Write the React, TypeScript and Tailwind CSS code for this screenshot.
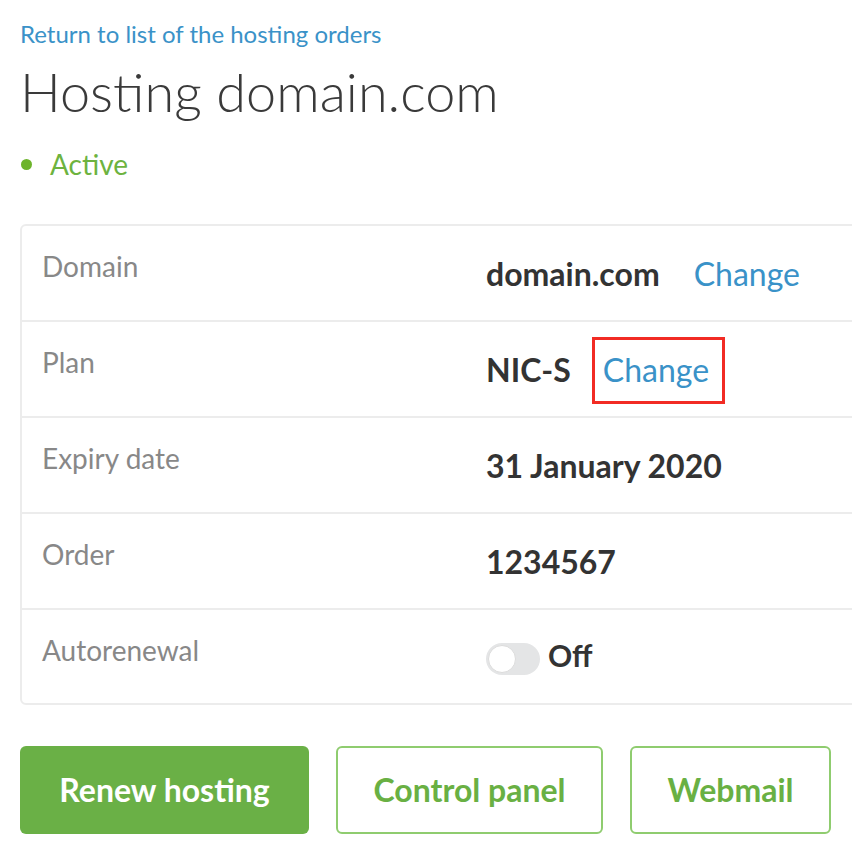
const rows = [
  { label: "Domain", value: "domain.com", change: true },
  { label: "Plan", value: "NIC-S", change: true, highlight: true },
  { label: "Expiry date", value: "31 January 2020" },
  { label: "Order", value: "1234567" },
];

function ChangeLink({ highlight }: { highlight?: boolean }) {
  if (highlight) {
    return (
      <span className="ml-[21px] -mt-[15px] inline-block border-[3px] border-[#f22b24] pl-[8px] pr-[13px] pt-[12px] pb-[13px] text-[32px] font-normal leading-[36px] text-[#3a92c8]">
        Change
      </span>
    );
  }
  return (
    <span className="ml-[34px] text-[32px] font-normal leading-[36px] text-[#3a92c8]">
      Change
    </span>
  );
}

export default function App() {
  return (
    <div className="min-h-[854px] overflow-hidden bg-white font-['Lato',sans-serif]">
      <div className="pl-[20px] pt-[18px]">
        <a className="block text-[24px] leading-[32px] text-[#3a92c8]">
          Return to list of the hosting orders
        </a>
        <h1 className="mt-[10px] text-[54px] font-light leading-[64px] text-[#3a3a3a]">
          Hosting domain.com
        </h1>
        <div className="mt-[24px] flex items-center">
          <span className="ml-[1px] h-[11px] w-[11px] rounded-full bg-[#6db42b]" />
          <span className="ml-[18px] text-[28px] leading-[32px] text-[#6db33f]">
            Active
          </span>
        </div>

        <div className="mt-[44px] w-[860px] rounded-[6px] border-2 border-[#ececec]">
          {rows.map((r) => (
            <div
              key={r.label}
              className="flex h-[96px] border-b-2 border-[#ececec]"
            >
              <div className="w-[464px] shrink-0 pl-[20px] pt-[24px] text-[28px] leading-[32px] text-[#888]">
                {r.label}
              </div>
              <div className="flex items-baseline self-start pt-[30px] text-[32px] font-bold leading-[36px] text-[#333]">
                <span>{r.value}</span>
                {r.change && <ChangeLink highlight={r.highlight} />}
              </div>
            </div>
          ))}
          <div className="flex h-[93px]">
            <div className="w-[464px] shrink-0 pl-[20px] pt-[24px] text-[28px] leading-[32px] text-[#888]">
              Autorenewal
            </div>
            <div className="flex items-start pt-[33px]">
              <div className="flex h-[32px] w-[54px] items-center rounded-full bg-[#e4e5e6] pl-[2px]">
                <div className="h-[28px] w-[28px] rounded-full border border-[#dcdcdc] bg-white" />
              </div>
              <span className="ml-[8px] -mt-[4px] text-[30px] font-bold leading-[32px] text-[#333]">
                Off
              </span>
            </div>
          </div>
        </div>

        <div className="mt-[41px] flex gap-[27px]">
          <button className="h-[88px] w-[289px] rounded-[6px] bg-[#6ab046] text-[32px] font-bold text-white">
            Renew hosting
          </button>
          <button className="h-[88px] w-[267px] rounded-[6px] border-2 border-[#8fcc6f] text-[32px] font-bold text-[#69b043]">
            Control panel
          </button>
          <button className="h-[88px] w-[201px] rounded-[6px] border-2 border-[#8fcc6f] text-[32px] font-bold text-[#69b043]">
            Webmail
          </button>
        </div>
      </div>
    </div>
  );
}
